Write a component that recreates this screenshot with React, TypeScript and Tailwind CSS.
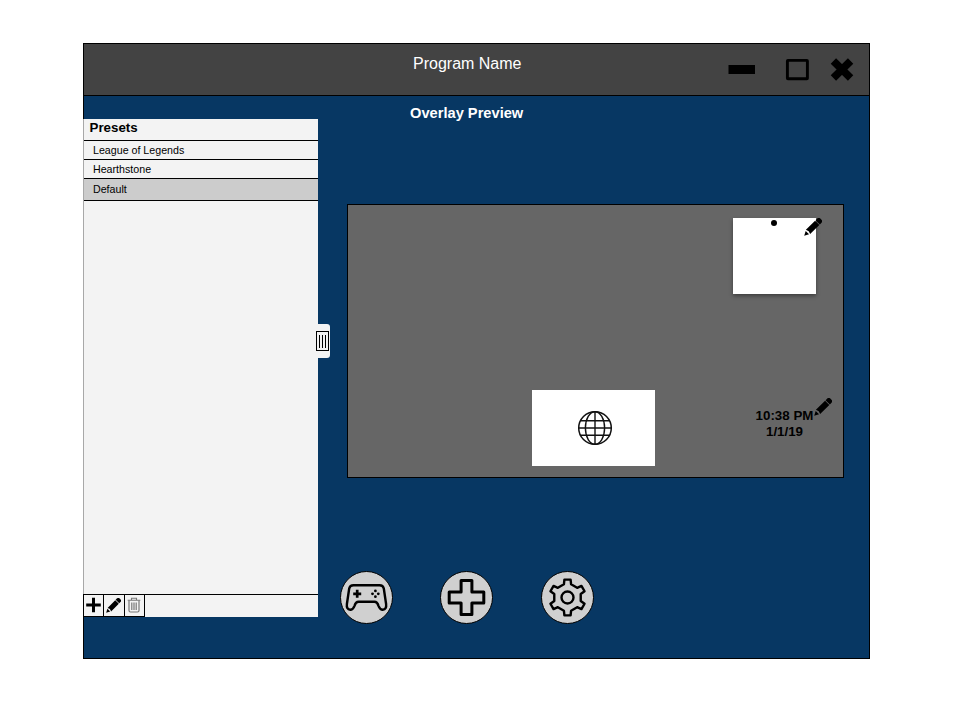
import React from "react";

function Pencil({ className }: { className: string }) {
  return (
    <svg viewBox="0 0 18 18" className={className}>
      <g transform="translate(0.2 17.8) rotate(-45)" fill="#000">
        <path d="M0 0 L4.5 -2.4 V2.4 Z" />
        <path d="M5.4 -3 H18.4 V3 H5.4 L6.4 0 Z" />
        <path d="M19.1 -3 H21.2 Q23.6 -3 23.6 -0.8 V0.8 Q23.6 3 21.2 3 H19.1 Z" />
      </g>
    </svg>
  );
}

function gearPoints() {
  const tooth = [
    [-3.6, -13.2],
    [-3.1, -17.9],
    [3.1, -17.9],
    [3.6, -13.2],
  ];
  const points: string[] = [];
  for (let i = 0; i < 6; i++) {
    const a = (i * Math.PI) / 3;
    for (const [x, y] of tooth) {
      points.push(
        `${(x * Math.cos(a) - y * Math.sin(a)).toFixed(2)},${(x * Math.sin(a) + y * Math.cos(a)).toFixed(2)}`
      );
    }
  }
  return points.join(" ");
}

function RoundButton({ label, children }: { label: string; children: React.ReactNode }) {
  return (
    <button aria-label={label} className="h-[53px] w-[53px] rounded-full border border-black bg-[#d0d0d0]">
      <svg viewBox="-25.5 -25.5 51 51" className="h-[51px] w-[51px]" fill="none" stroke="#000" strokeLinejoin="round">
        {children}
      </svg>
    </button>
  );
}

function TitleBar() {
  return (
    <header className="flex h-[52px] shrink-0 border-b border-black bg-[#434343]">
      <div className="w-[329px]" />
      <h1 className="w-[315px] pt-[10px] text-[16px] leading-5 text-white">Program Name</h1>
      <svg viewBox="0 0 130 30" className="mt-[10px] h-[30px] w-[130px]">
        <rect x="0.5" y="11" width="26.5" height="9" fill="#000" />
        <rect x="59.4" y="6.4" width="20" height="18.4" rx="0.5" fill="none" stroke="#000" strokeWidth="2.9" />
        <path d="M105.4 7 L122.6 24 M122.6 7 L105.4 24" stroke="#000" strokeWidth="7.6" />
      </svg>
    </header>
  );
}

function Sidebar() {
  return (
    <aside className="relative -ml-px mt-[23px] flex h-[498px] w-[235px] shrink-0 flex-col border-l border-[#a8a8a8] bg-[#f3f3f3] text-black">
      <h2 className="h-[22px] border-b border-black pl-[5.5px] text-[13.33px] font-bold leading-[18px]">Presets</h2>
      <ul className="text-[10.67px]">
        <li className="h-[19px] border-b border-black pl-[9px] leading-[19px]">League of Legends</li>
        <li className="h-[19px] border-b border-black pl-[9px] leading-[19px]">Hearthstone</li>
        <li className="h-[22px] border-b border-black bg-[#cccccc] pl-[9px] leading-[21px]">Default</li>
      </ul>
      <div className="-ml-px mt-auto flex h-[23px] border-t border-black">
        <button aria-label="Add" className="flex w-[21px] items-center justify-center border-x border-b border-black">
          <svg viewBox="0 0 16 16" className="-mt-px h-4 w-4">
            <path d="M7.5 0.7 V15.3 M0.2 8 H14.8" stroke="#000" strokeWidth="3" />
          </svg>
        </button>
        <button aria-label="Edit" className="flex w-[21px] items-center justify-center border-b border-r border-black">
          <Pencil className="-ml-px h-[15px] w-[15px]" />
        </button>
        <button aria-label="Delete" className="flex w-5 justify-center border-b border-r border-black pt-[2px]">
          <svg viewBox="0 0 14 16" className="-ml-[2px] h-4 w-[14px]" fill="none" stroke="#777">
            <path d="M0.7 3.3 H13.3 M4.5 3 V1.2 H9.5 V3" strokeWidth="1.1" />
            <path d="M2 3.5 V13.5 Q2 15 3.5 15 H10.5 Q12 15 12 13.5 V3.5" strokeWidth="1.2" />
            <path d="M4.8 5.5 V13 M7 5.5 V13 M9.2 5.5 V13" strokeWidth="1.2" />
          </svg>
        </button>
      </div>
      <div className="absolute left-[231px] top-[205px] flex h-[34px] w-[15px] items-center rounded-r-[3px] bg-[#f3f3f3]">
        <div className="ml-px flex h-5 w-[13px] items-center justify-center gap-[2px] border border-black">
          <i className="h-[13px] w-px bg-black" />
          <i className="h-[13px] w-px bg-black" />
          <i className="h-[13px] w-px bg-black" />
        </div>
      </div>
    </aside>
  );
}

function Preview() {
  return (
    <section className="relative ml-[29px] mt-[81px] h-[274px] w-[497px] border border-black bg-[#666666]">
      <div className="absolute left-[385px] top-[13px] h-[76px] w-[83px] bg-white shadow-[0_2px_4px_rgba(0,0,0,0.4)]">
        <div className="ml-[38px] mt-[2px] h-[6px] w-[6px] rounded-full bg-black" />
      </div>
      <Pencil className="absolute left-[456px] top-[13px] h-[18px] w-[18px]" />
      <div className="absolute left-[184px] top-[185px] flex h-[76px] w-[123px] items-center justify-center bg-white">
        <svg viewBox="0 0 36 36" className="ml-[2px] h-9 w-9" fill="none" stroke="#111" strokeWidth="1.4">
          <circle cx="18" cy="18" r="16.3" strokeWidth="1.5" />
          <ellipse cx="18" cy="18" rx="9.6" ry="16.3" />
          <path d="M18 1.7 V34.3 M1.7 18 H34.3 M3.4 10.8 H32.6 M3.4 25.2 H32.6" />
        </svg>
      </div>
      <div className="absolute left-[404.5px] top-[203px] w-[64px] text-center text-[13.33px] font-bold leading-4 text-black">
        <p className="whitespace-nowrap">10:38 PM</p>
        <p>1/1/19</p>
      </div>
      <Pencil className="absolute left-[466px] top-[193px] h-[18px] w-[18px]" />
    </section>
  );
}

export default function App() {
  return (
    <div className="h-[720px] w-[960px] bg-white pl-[83px] pt-[43px] font-['Liberation_Sans',Arial,sans-serif]">
      <div className="flex h-[616px] w-[787px] flex-col border border-black bg-[#073763]">
        <TitleBar />
        <div className="flex flex-1">
          <Sidebar />
          <main className="flex flex-1 flex-col">
            <h2 className="ml-[92px] mt-[7px] h-5 text-[14.67px] font-bold leading-5 text-white">Overlay Preview</h2>
            <Preview />
            <div className="ml-[22px] mt-[93px] flex gap-[47.3px]">
              <RoundButton label="Games">
                <path
                  d="M-13 -12.3 H13 Q16.6 -12.3 17.3 -9 L19.6 6.5 Q20.3 12 16.2 12.3 Q13.5 12.3 12 8.3 Q10.8 4.2 8 4.2 H-8 Q-10.8 4.2 -12 8.3 Q-13.5 12.3 -16.2 12.3 Q-20.3 12 -19.6 6.5 L-17.3 -9 Q-16.6 -12.3 -13 -12.3 Z"
                  strokeWidth="2.4"
                />
                <path d="M-9.3 -7.7 V0.3 M-13.3 -3.7 H-5.3" strokeWidth="2.7" />
                <g fill="#000" stroke="none">
                  <circle cx="8.9" cy="-6.6" r="1.4" />
                  <circle cx="8.9" cy="-0.8" r="1.4" />
                  <circle cx="6" cy="-3.7" r="1.4" />
                  <circle cx="11.8" cy="-3.7" r="1.4" />
                </g>
              </RoundButton>
              <RoundButton label="Add widget">
                <path
                  d="M-5.4 -17 H5.4 V-5.4 H17.3 V5.4 H5.4 V17 H-5.4 V5.4 H-17.3 V-5.4 H-5.4 Z"
                  strokeWidth="3"
                />
              </RoundButton>
              <RoundButton label="Settings">
                <polygon points={gearPoints()} strokeWidth="2.4" />
                <circle r="6" strokeWidth="2.4" />
              </RoundButton>
            </div>
          </main>
        </div>
      </div>
    </div>
  );
}
